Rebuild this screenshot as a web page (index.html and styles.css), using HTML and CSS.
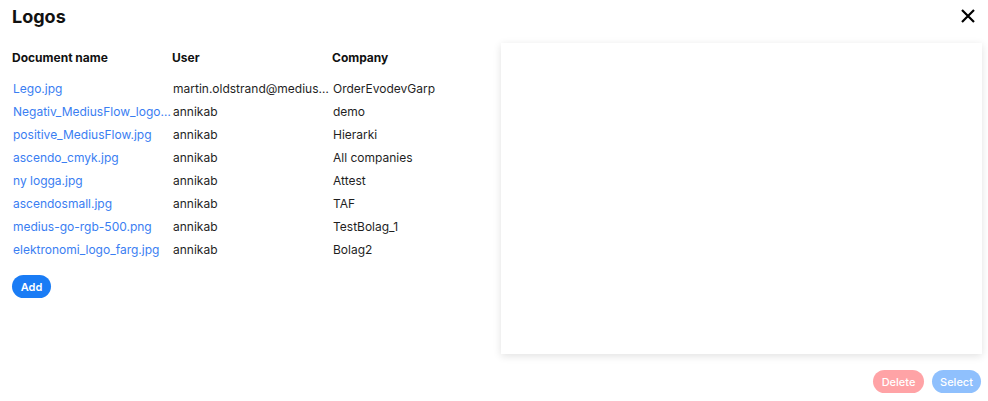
FILE: index.html
```html
<!DOCTYPE html>
<html>
<head>
<meta charset="utf-8">
<link rel="stylesheet" href="styles.css">
</head>
<body>
<div class="dialog">
  <div class="head">
    <h1 class="title">Logos</h1>
    <button class="close" aria-label="Close">
      <svg width="16" height="16" viewBox="0 0 16 16"><path d="M2 2 L14 14 M14 2 L2 14" stroke="#000" stroke-width="2.2" fill="none"/></svg>
    </button>
  </div>
  <div class="main">
    <div class="left">
      <table class="grid">
        <colgroup><col class="c"><col class="c"><col class="c"></colgroup>
        <thead>
          <tr><th>Document name</th><th>User</th><th>Company</th></tr>
        </thead>
        <tbody>
          <tr><td class="link">Lego.jpg</td><td>martin.oldstrand@medius.se</td><td>OrderEvodevGarp</td></tr>
          <tr><td class="link">Negativ_MediusFlow_logotype.jpg</td><td>annikab</td><td>demo</td></tr>
          <tr><td class="link">positive_MediusFlow.jpg</td><td>annikab</td><td>Hierarki</td></tr>
          <tr><td class="link">ascendo_cmyk.jpg</td><td>annikab</td><td>All companies</td></tr>
          <tr><td class="link">ny logga.jpg</td><td>annikab</td><td>Attest</td></tr>
          <tr><td class="link">ascendosmall.jpg</td><td>annikab</td><td>TAF</td></tr>
          <tr><td class="link">medius-go-rgb-500.png</td><td>annikab</td><td>TestBolag_1</td></tr>
          <tr><td class="link">elektronomi_logo_farg.jpg</td><td>annikab</td><td>Bolag2</td></tr>
        </tbody>
      </table>
      <button class="btn btn-add">Add</button>
    </div>
    <div class="preview"></div>
  </div>
  <div class="foot">
    <button class="btn btn-delete">Delete</button>
    <button class="btn btn-select">Select</button>
  </div>
</div>
</body>
</html>
```
FILE: styles.css
```css
html, body {
  margin: 0;
  padding: 0;
  background: #fff;
}
body {
  font-family: Inter, "Noto Sans", sans-serif;
  color: #1a1a1a;
  font-size: 12px;
}
.dialog {
  width: 988px;
  height: 401px;
  box-sizing: border-box;
  padding: 0 6px 8px 12px;
  display: flex;
  flex-direction: column;
}
.head {
  display: flex;
  justify-content: space-between;
  align-items: flex-start;
  height: 43px;
}
.title {
  margin: 0;
  padding-top: 6px;
  font-size: 18px;
  font-weight: 700;
  color: #111;
  line-height: 22px;
}
.close {
  border: 0;
  background: none;
  padding: 0;
  margin: 8px 6px 0 0;
  width: 16px;
  height: 16px;
  cursor: pointer;
}
.close svg { display: block; }
.main {
  display: flex;
  height: 311px;
}
.left {
  width: 489px;
  flex: none;
}
.grid {
  border-collapse: collapse;
  table-layout: fixed;
  width: 480px;
}
.grid col.c { width: 160px; }
.grid th {
  text-align: left;
  font-weight: 700;
  font-size: 12px;
  color: #111;
  height: 28px;
  padding: 0 0 3px 0;
  vertical-align: middle;
}
.grid td {
  height: 23px;
  padding: 0 0 0 1px;
  white-space: nowrap;
  overflow: hidden;
  text-overflow: ellipsis;
  vertical-align: middle;
  color: #1f1f1f;
}
.grid tbody tr:first-child td { height: 23px; padding-top: 3px; }
.grid td.link { color: #3a7ef2; }
.btn {
  border: 0;
  border-radius: 12px;
  height: 23px;
  font-family: Inter, "Noto Sans", sans-serif;
  font-size: 11px;
  font-weight: 500;
  color: #fff;
  padding: 0 10px;
  cursor: pointer;
}
.btn-add {
  margin-top: 14px;
  background: #1a7cf5;
  font-weight: 600;
  width: 39px;
  padding: 0;
}
.preview {
  width: 481px;
  height: 311px;
  background: #fff;
  box-shadow: 0 2px 8px rgba(0, 0, 0, 0.12);
}
.foot {
  display: flex;
  justify-content: flex-end;
  gap: 8px;
  margin-top: 16px;
  padding-right: 1px;
}
.btn-delete {
  background: #ffa3a6;
  width: 51px;
  padding: 0;
}
.btn-select {
  background: #8fc0fd;
  width: 49px;
  padding: 0;
}
```
